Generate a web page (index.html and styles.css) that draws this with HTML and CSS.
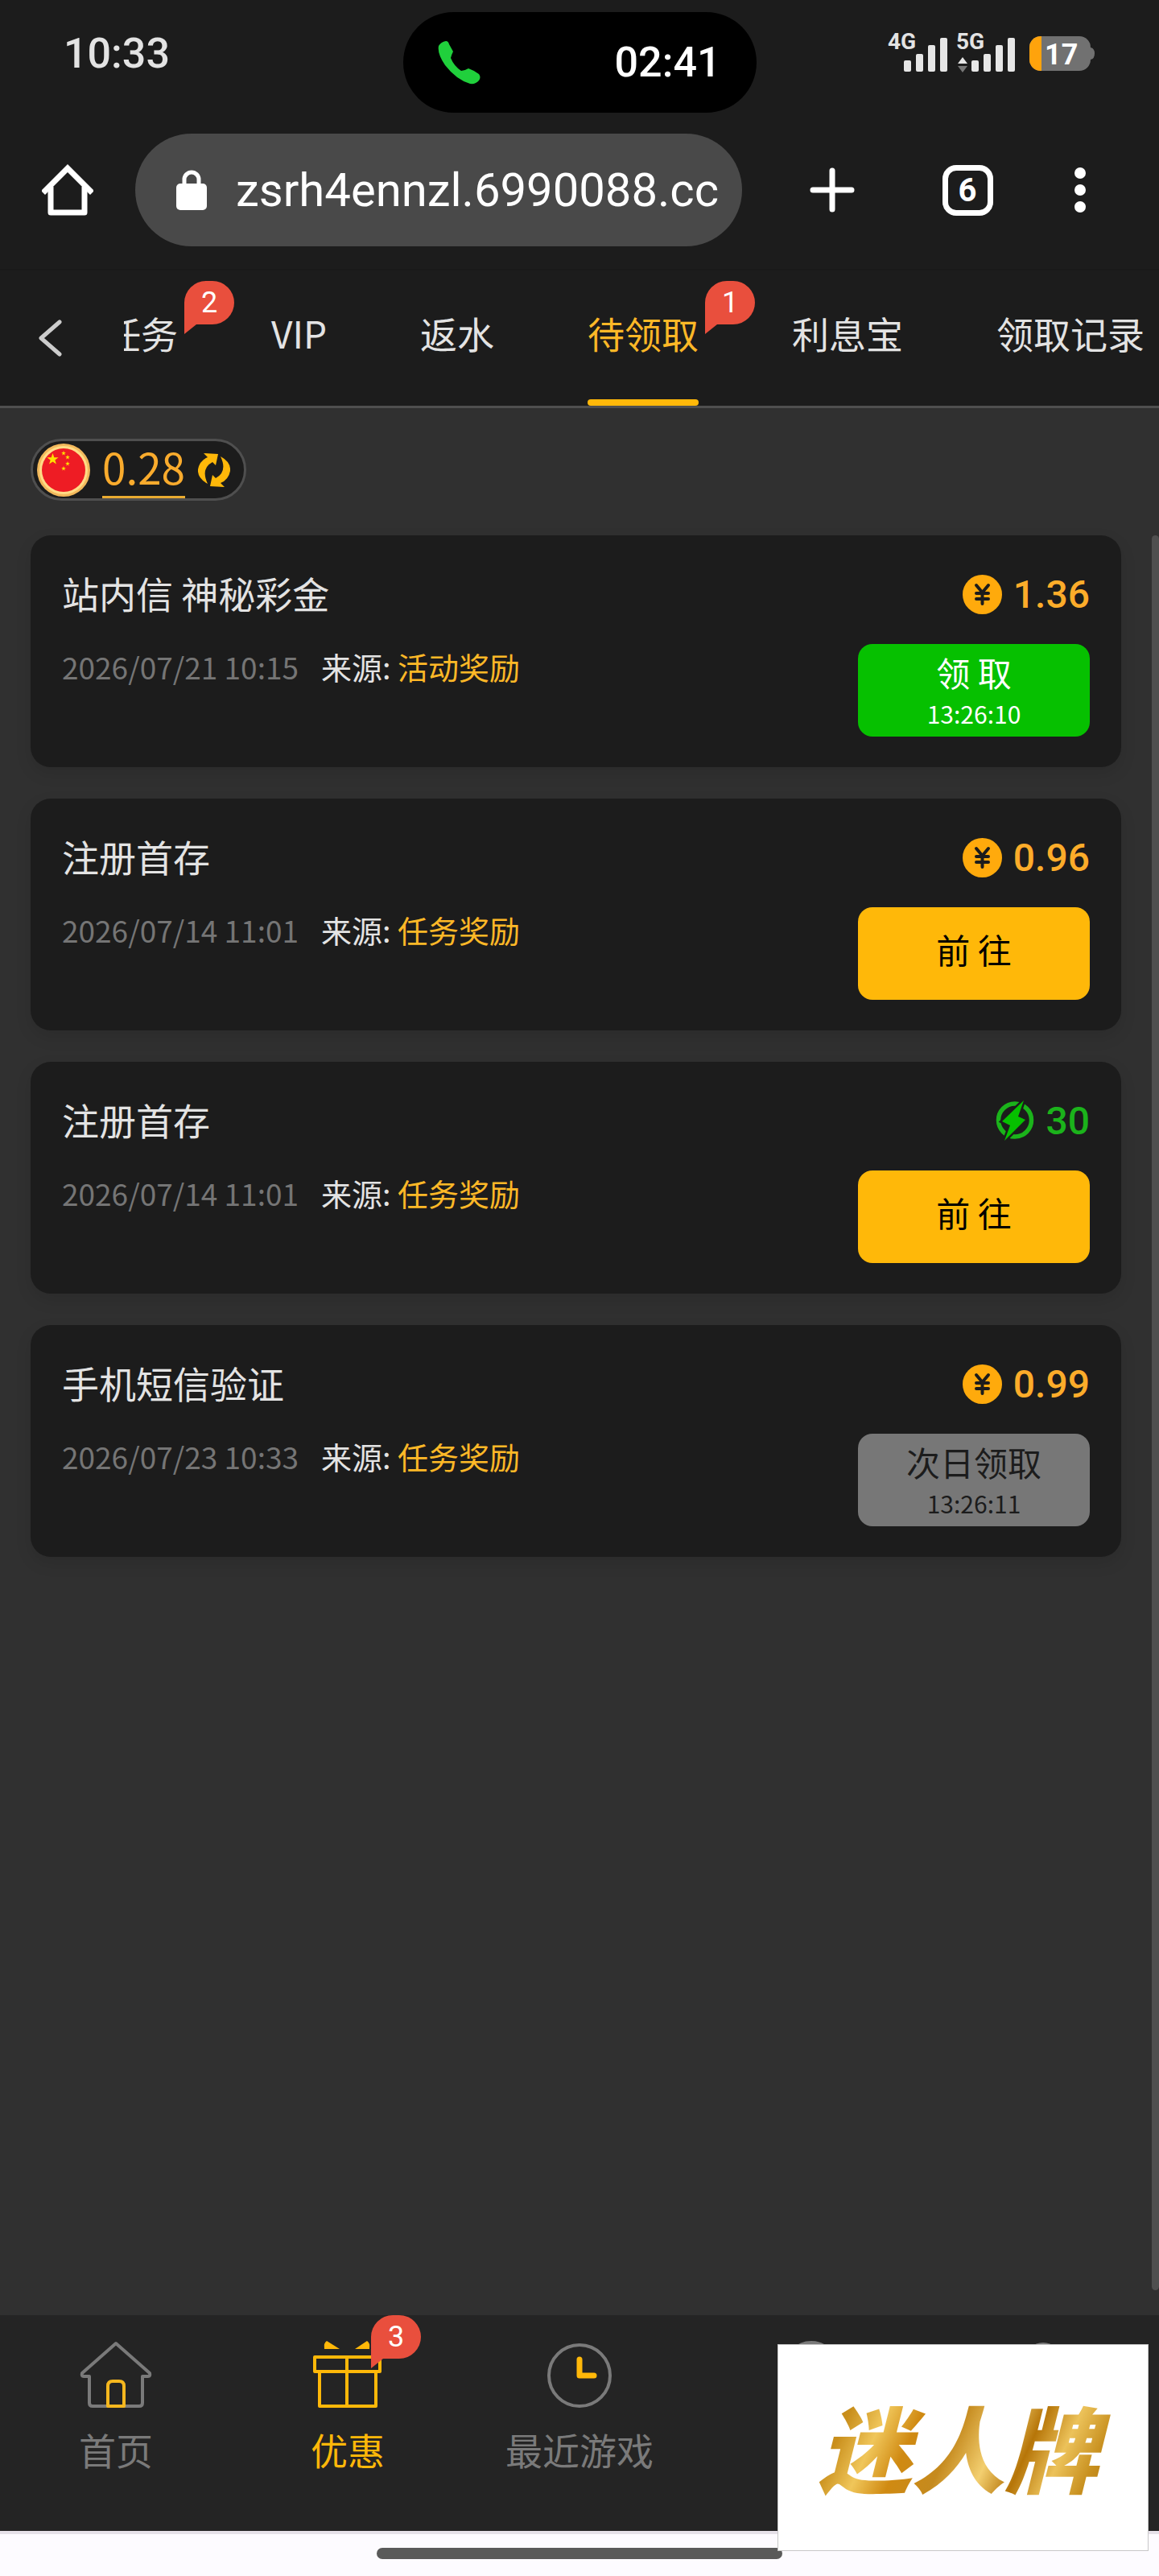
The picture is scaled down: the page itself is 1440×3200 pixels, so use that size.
FILE: index.html
```html
<!DOCTYPE html>
<html lang="zh-CN">
<head>
    <meta charset="UTF-8">
    <meta name="viewport" content="width=device-width, initial-scale=1">
    <title>待领取</title>
    <link rel="stylesheet" href="styles.css">
</head>
<body>
    <!-- Shared icons -->
    <svg class="sprite" width="0" height="0" aria-hidden="true">
        <symbol id="star" viewBox="-10 -10 20 20">
            <path d="M0-10 2.4-3.1 9.5-3.1 3.8 1.2 5.9 8.1 0 4-5.9 8.1-3.8 1.2-9.5-3.1-2.4-3.1Z"/>
        </symbol>
        <symbol id="yen" viewBox="0 0 49 49">
            <circle cx="24.5" cy="24.5" r="24.5" fill="#ffaa0c"/>
            <path d="M17 13l7.500 9 7.500-9M24.500 22v14M17 23h15M17 30h15" fill="none" stroke="#1c1c1c" stroke-width="4" stroke-linecap="round"/>
        </symbol>
        <symbol id="bolt" viewBox="0 0 48 50">
            <circle cx="24" cy="24.500" r="20.500" fill="none" stroke="#1bb31b" stroke-width="5.500"/>
            <path d="M35 0 28 20 37 24 11 50 18 31 8 26Z" fill="#06c000" stroke="#1c1c1c" stroke-width="5" paint-order="stroke"/>
        </symbol>
    </svg>

    <header class="status-bar">
        <span class="clock">10:33</span>
        <div class="island">
            <svg width="54" height="54" viewBox="0 0 54 54"><path fill="#20d03c" d="M1 6Q4 1 10 0 13 0 14 4L19 13Q17 17 16 21 20 31 29 37 33 37 38 34 44 36 51 41 54 45 51 49 47 54 40 53 23 48 9 30-1 15 1 6Z"/></svg>
            <span>02:41</span>
        </div>
        <div class="signals">
            <div class="signal">
                <span>4G</span>
                <svg width="75" height="50" viewBox="0 0 75 50" fill="#e6e6e6"><rect x="20" y="34" width="9" height="14" rx="2"/><rect x="35" y="26" width="9" height="22" rx="2"/><rect x="50" y="15" width="9" height="33" rx="2"/><rect x="65" y="6" width="9" height="42" rx="2"/></svg>
            </div>
            <div class="signal">
                <span>5G</span>
                <svg width="75" height="50" viewBox="0 0 75 50" fill="#e6e6e6"><path d="M8 30l6 8H2z"/><path d="M8 49l6-8H2z" fill="#777"/><rect x="19" y="34" width="9" height="14" rx="2"/><rect x="34" y="26" width="9" height="22" rx="2"/><rect x="49" y="15" width="9" height="33" rx="2"/><rect x="64" y="6" width="9" height="42" rx="2"/></svg>
            </div>
            <svg class="battery" width="82" height="43" viewBox="0 0 82 43">
                <rect width="76" height="43" rx="14" fill="#717171"/>
                <path d="M76 14q5 1 5 7.500T76 29z" fill="#717171"/>
                <path d="M15 0h-1A14 14 0 0 0 0 14v15a14 14 0 0 0 14 14h1z" fill="#ffa30c"/>
                <text class="level" x="19" y="35">17</text>
            </svg>
        </div>
    </header>

    <div class="toolbar">
        <button type="button" aria-label="Home">
            <svg width="64" height="64" viewBox="0 0 64 64" fill="none" stroke="#fff" stroke-width="7" stroke-linejoin="round"><path d="M4 33 32 5 60 33" stroke-linejoin="miter" stroke-linecap="square"/><path d="M11 28V60H53V28"/></svg>
        </button>
        <label class="address">
            <svg width="38" height="50" viewBox="0 0 38 50"><rect y="17" width="38" height="33" rx="5" fill="#fff"/><path d="M10 19V12a9 9 0 0 1 18 0v7" fill="none" stroke="#fff" stroke-width="5"/></svg>
            <input type="text" aria-label="URL" value="zsrh4ennzl.6990088.cc" spellcheck="false">
        </label>
        <button type="button" aria-label="New tab">
            <svg width="56" height="56" viewBox="0 0 56 56" stroke="#fff" stroke-width="7" stroke-linecap="round"><path d="M28 4v48M4 28h48"/></svg>
        </button>
        <button type="button" class="tab-count"><span>6</span></button>
        <button type="button" aria-label="More">
            <svg width="14" height="58" viewBox="0 0 14 58" fill="#fff"><circle cx="7" cy="8" r="7"/><circle cx="7" cy="29" r="7"/><circle cx="7" cy="50" r="7"/></svg>
        </button>
    </div>

    <nav class="tabs">
        <button type="button" class="back" aria-label="Back">
            <svg width="30" height="46" viewBox="0 0 30 46" fill="none" stroke="#ccc" stroke-width="5" stroke-linecap="round" stroke-linejoin="round"><path d="M27 3 4 23 27 43"/></svg>
        </button>
        <div class="tab-scroll">
            <div class="tab-list">
                <a href="#">任务<span class="badge">2</span></a>
                <a href="#">VIP</a>
                <a href="#">返水</a>
                <a href="#" class="active">待领取<span class="badge">1</span></a>
                <a href="#">利息宝</a>
                <a href="#">领取记录</a>
            </div>
        </div>
    </nav>

    <main>
        <div class="balance">
            <svg width="66" height="66" viewBox="0 0 66 66">
                <circle cx="33" cy="33" r="33" fill="#f3b95c"/>
                <circle cx="33" cy="33" r="30" fill="#ffdc86"/>
                <circle cx="33" cy="33" r="27" fill="#ee1c24"/>
                <g fill="#ffe100">
                    <use href="#star" x="12" y="12" width="15" height="15"/>
                    <use href="#star" x="30" y="9" width="6" height="6"/>
                    <use href="#star" x="35" y="14" width="6" height="6"/>
                    <use href="#star" x="35" y="22" width="6" height="6"/>
                    <use href="#star" x="30" y="28" width="6" height="6"/>
                </g>
            </svg>
            <span class="balance-value">0.28</span>
            <button type="button" aria-label="Refresh">
                <svg width="40" height="42" viewBox="0 0 40 42" fill="#ffb809"><path id="arrow" d="M7 0 25 1 22 15 18 11Q3 19 12 38-1 31 0 20 2 9 12 5Z"/><use href="#arrow" transform="rotate(180 20 21)"/></svg>
            </button>
        </div>

        <div class="reward-list">
            <div class="card">
                <div class="info">
                    <h2>站内信 神秘彩金</h2>
                    <p><time>2026/07/21 10:15</time><span>来源: <em>活动奖励</em></span></p>
                </div>
                <div class="action">
                    <div class="amount"><svg width="49" height="49"><use href="#yen"/></svg>1.36</div>
                    <button type="button" class="timed claim">领 取<small>13:26:10</small></button>
                </div>
            </div>
            <div class="card">
                <div class="info">
                    <h2>注册首存</h2>
                    <p><time>2026/07/14 11:01</time><span>来源: <em>任务奖励</em></span></p>
                </div>
                <div class="action">
                    <div class="amount"><svg width="49" height="49"><use href="#yen"/></svg>0.96</div>
                    <button type="button">前 往</button>
                </div>
            </div>
            <div class="card">
                <div class="info">
                    <h2>注册首存</h2>
                    <p><time>2026/07/14 11:01</time><span>来源: <em>任务奖励</em></span></p>
                </div>
                <div class="action">
                    <div class="amount bonus"><svg width="48" height="50"><use href="#bolt"/></svg>30</div>
                    <button type="button">前 往</button>
                </div>
            </div>
            <div class="card">
                <div class="info">
                    <h2>手机短信验证</h2>
                    <p><time>2026/07/23 10:33</time><span>来源: <em>任务奖励</em></span></p>
                </div>
                <div class="action">
                    <div class="amount"><svg width="49" height="49"><use href="#yen"/></svg>0.99</div>
                    <button type="button" class="timed" disabled>次日领取<small>13:26:11</small></button>
                </div>
            </div>
        </div>
    </main>

    <nav class="tabbar">
        <a href="#">
            <span class="icon"><svg width="90" height="83" viewBox="0 0 90 83" fill="none" stroke-width="4" stroke-linejoin="round"><path stroke="#7a7a7a" d="M45 3 3 40Q2 44 5 44H12V77Q12 81 16 81H74Q78 81 78 77V44H85Q88 44 87 40Z"/><path stroke="#f5b71e" d="M35 81V56Q35 50 41 50H49Q55 50 55 56V81Z"/></svg></span>
            首页
        </a>
        <a href="#" class="active">
            <span class="icon"><svg width="86" height="83" viewBox="0 0 86 83" fill="none" stroke="#ffb809" stroke-width="4" stroke-linejoin="round"><path d="M2 20H83V38H2ZM8 38V81H78V38M42 20V81"/><path d="M14 10Q13 2 17 0L33 10ZM52 10 67 0Q71 2 70 10Z" fill="#ffb809" stroke="none"/></svg><span class="badge">3</span></span>
            优惠
        </a>
        <a href="#">
            <span class="icon"><svg width="80" height="83" viewBox="0 0 80 83" fill="none"><circle cx="40" cy="43" r="38" stroke="#7a7a7a" stroke-width="4"/><path d="M40 23V43H58" stroke="#ffb809" stroke-width="7" stroke-linecap="round" stroke-linejoin="round"/></svg></span>
            最近游戏
        </a>
        <a href="#" aria-label="客服">
            <span class="icon"><svg width="86" height="83" viewBox="0 0 86 83" fill="none" stroke="#7a7a7a" stroke-width="4"><path d="M11 44V34a32 32 0 0 1 64 0v10"/><rect x="3" y="44" width="16" height="24" rx="6"/><rect x="67" y="44" width="16" height="24" rx="6"/></svg></span>
        </a>
        <a href="#" aria-label="我的">
            <span class="icon"><svg width="86" height="83" viewBox="0 0 86 83" fill="none" stroke="#7a7a7a" stroke-width="4"><circle cx="43" cy="24" r="20"/><path d="M7 81a36 30 0 0 1 72 0z"/></svg></span>
        </a>
    </nav>
    <footer class="gesture-bar"><span></span></footer>

    <a href="#" class="brand"><span>迷人牌</span></a>
</body>
</html>
```
FILE: styles.css
```css
* {
    box-sizing: border-box;
}
body {
    position: relative;
    display: flex;
    flex-direction: column;
    min-height: 100vh;
    margin: 0;
    background: #1c1c1c;
    color: #e3e3e3;
    font-family: "Noto Sans CJK SC", sans-serif;
    font-size: 46px;
}
svg {
    display: block;
    flex: none;
}
.sprite {
    position: absolute;
}
a {
    color: inherit;
    text-decoration: none;
}
button {
    padding: 0;
    border: 0;
    background: none;
    color: inherit;
    font: inherit;
    cursor: pointer;
}

/* Phone status bar */
.status-bar {
    display: grid;
    grid-template-columns: 1fr auto 1fr;
    padding: 15px 79px 0;
    height: 140px;
    font-family: Roboto, sans-serif;
    font-size: 52px;
    font-weight: 500;
    line-height: 104px;
}
.island {
    display: flex;
    align-items: center;
    justify-content: space-between;
    width: 439px;
    height: 125px;
    padding: 0 44px 0 43px;
    border-radius: 63px;
    background: #000;
    color: #fff;
}
.signals {
    display: flex;
    align-items: center;
    justify-content: flex-end;
    gap: 10px;
    height: 102px;
}
.signal {
    position: relative;
}
.signal span {
    position: absolute;
    top: -6px;
    left: 0;
    font-size: 28px;
    font-weight: 700;
    line-height: 34px;
}
.battery {
    margin-left: 6px;
}
.level {
    font-size: 36px;
    font-weight: 700;
    fill: #fff;
}

/* Browser toolbar */
.toolbar {
    display: grid;
    grid-template-columns: 168px minmax(0, 1fr) 168px 168px 112px;
    align-items: center;
    padding: 26px 42px 28px 0;
    border-bottom: 2px solid #191919;
}
.toolbar button {
    display: grid;
    place-items: center;
}
.address {
    display: flex;
    align-items: center;
    gap: 36px;
    height: 140px;
    margin-right: 28px;
    padding: 0 24px 0 51px;
    border-radius: 70px;
    background: #494949;
}
.address input {
    flex: 1;
    min-width: 0;
    padding: 0;
    border: 0;
    outline: 0;
    background: none;
    color: #fff;
    font-family: Roboto, sans-serif;
    font-size: 58px;
}
.tab-count span {
    width: 63px;
    height: 63px;
    border: 7px solid #fff;
    border-radius: 17px;
    color: #fff;
    font-family: Roboto, sans-serif;
    font-size: 40px;
    font-weight: 700;
    line-height: 50px;
}

/* Promotion tabs */
.tabs {
    display: flex;
    border-bottom: 3px solid #4f4f4f;
}
.back {
    display: flex;
    align-items: center;
    width: 154px;
    padding-left: 47px;
}
.tab-scroll {
    flex: 1;
    min-width: 0;
    overflow: hidden;
}
.tab-list {
    display: flex;
    gap: 116px;
    margin-left: -25px;
}
.tab-list a {
    position: relative;
    height: 168px;
    line-height: 155px;
    white-space: nowrap;
}
.tab-list .active {
    color: #fdb827;
}
.tab-list .active::before {
    content: "";
    position: absolute;
    right: 0;
    bottom: 0;
    left: 0;
    height: 8px;
    border-radius: 4px;
    background: #ffb809;
}
.badge {
    position: absolute;
    top: 13px;
    left: 100%;
    width: 62px;
    height: 54px;
    margin-left: 8px;
    border-radius: 27px 27px 27px 0;
    background: #e94f3d;
    color: #fff;
    font-family: Roboto, sans-serif;
    font-size: 36px;
    line-height: 54px;
    text-align: center;
}
.badge::after {
    content: "";
    position: absolute;
    top: 100%;
    left: 0;
    border-top: 12px solid #e94f3d;
    border-right: 15px solid transparent;
}

/* Content */
main {
    display: flex;
    flex: 1;
    flex-direction: column;
    align-items: flex-start;
    padding: 38px 0 31px;
    background: #303030;
}
.balance {
    display: flex;
    align-items: center;
    height: 77px;
    margin: 0 38px 43px;
    padding: 0 17px 0 5px;
    border: 3px solid #4f4f4f;
    border-radius: 39px;
    background: #1c1c1c;
}
.balance-value {
    height: 71px;
    margin: 0 16px 0 15px;
    border-bottom: 3px solid #e9ab31;
    color: #f9ab2d;
    font-size: 53px;
    line-height: 62px;
}
.reward-list {
    position: relative;
    display: flex;
    flex: 1;
    flex-direction: column;
    gap: 39px;
    align-self: stretch;
    padding: 0 47px 0 38px;
}
/* scroll thumb */
.reward-list::after {
    content: "";
    position: absolute;
    top: 0;
    right: 0;
    bottom: 0;
    width: 9px;
    border-radius: 5px;
    background: #4f4f4f;
}
.card {
    display: flex;
    justify-content: space-between;
    padding: 39px 39px 38px;
    border-radius: 25px;
    background: #1c1c1c;
    box-shadow: 0 8px 20px rgba(0, 0, 0, 0.1);
}
h2 {
    margin: 0;
    font-size: 46px;
    font-weight: 400;
    line-height: 65px;
}
.info p {
    display: flex;
    gap: 28px;
    margin: 32px 0 0;
    font-size: 38px;
    line-height: 54px;
}
.info time {
    color: #757575;
    font-size: 37px;
}
.info em {
    color: #fdb827;
    font-style: normal;
}
.action {
    width: 288px;
}
.amount {
    display: flex;
    align-items: center;
    justify-content: flex-end;
    gap: 14px;
    height: 68px;
    color: #fcac2a;
    font-family: Roboto, sans-serif;
    font-size: 48px;
    font-weight: 500;
}
.amount.bonus {
    color: #1bb31b;
}
.action button {
    display: flex;
    flex-direction: column;
    align-items: center;
    justify-content: center;
    width: 100%;
    height: 115px;
    margin-top: 28px;
    padding-bottom: 12px;
    border-radius: 18px;
    background: #ffb809;
    color: #000;
    font-size: 42px;
    line-height: 60px;
}
.action .timed {
    padding-bottom: 4px;
}
.action .claim {
    background: #06c000;
    color: #fff;
}
.action button:disabled {
    background: #777;
    color: #1c1c1c;
}
.action small {
    font-size: 30px;
    line-height: 42px;
}

/* Bottom navigation */
.tabbar {
    display: flex;
    height: 268px;
    background: #242424;
    color: #7a7a7a;
}
.tabbar a {
    display: flex;
    flex: 1;
    flex-direction: column;
    align-items: center;
    padding-top: 32px;
    line-height: 54px;
}
.tabbar .active {
    color: #ffb809;
}
.icon {
    position: relative;
    margin-bottom: 24px;
}
.icon .badge {
    top: -32px;
    margin-left: -14px;
}
.gesture-bar {
    height: 56px;
    padding-top: 17px;
    border-top: 4px solid #e6e1e9;
    background: #fdfbff;
}
.gesture-bar span {
    display: block;
    width: 35%;
    height: 14px;
    margin: 0 auto;
    border-radius: 7px;
    background: #5a5a5a;
}

/* Floating brand panel */
.brand {
    position: absolute;
    right: 13px;
    bottom: 31px;
    display: grid;
    place-items: center;
    width: 461px;
    height: 257px;
    border: 1px solid #c8c8c8;
    background: #fff;
}
.brand span {
    padding: 0 20px 8px 8px;
    background: linear-gradient(115deg, #b97d12 0%, #c98f1c 14%, #f0c65a 24%, #d08a12 34%, #c58a1e 46%, #f3cf70 58%, #b67508 68%, #ecc25a 78%, #c8901f 88%, #a96f0c 100%);
    background-clip: text;
    -webkit-background-clip: text;
    color: transparent;
    font-size: 116px;
    font-style: italic;
    font-weight: 900;
    line-height: 150px;
}
```
